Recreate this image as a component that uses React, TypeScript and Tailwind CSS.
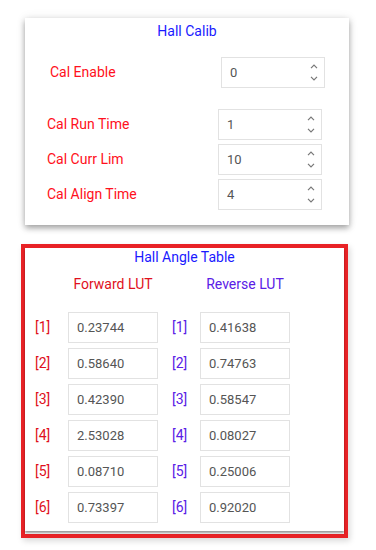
import React from "react";

const font = { fontFamily: "Roboto, 'Noto Sans', sans-serif" };

function Spinner() {
	return (
		<div className="absolute right-[6px] top-0 flex h-full flex-col items-center justify-center gap-[7px]">
			<svg width="8" height="5" viewBox="0 0 8 5" fill="none">
				<path d="M1 4.2 L4 1.2 L7 4.2" stroke="#777" strokeWidth="1.2" />
			</svg>
			<svg width="8" height="5" viewBox="0 0 8 5" fill="none">
				<path d="M1 0.8 L4 3.8 L7 0.8" stroke="#777" strokeWidth="1.2" />
			</svg>
		</div>
	);
}

function NumberBox({ value, className }: { value: string; className: string }) {
	return (
		<div
			className={`relative flex h-[31px] w-[104px] items-center border border-[#e2e2e2] bg-white pl-[8px] text-[13px] text-[#555] ${className}`}
		>
			{value}
			<Spinner />
		</div>
	);
}

function LutBox({ value }: { value: string }) {
	return (
		<div className="flex h-[31px] w-[90px] items-center border border-[#e2e2e2] bg-white pl-[8px] text-[13px] text-[#555]">
			{value}
		</div>
	);
}

const forward = ["0.23744", "0.58640", "0.42390", "2.53028", "0.08710", "0.73397"];
const reverse = ["0.41638", "0.74763", "0.58547", "0.08027", "0.25006", "0.92020"];

export default function App() {
	return (
		<div className="min-h-[550px] w-[376px] bg-white pt-[18px]" style={font}>
			{/* Hall Calib card */}
			<div className="ml-[25px] w-[324px] bg-white pb-[15px] shadow-[0_3px_6px_rgba(0,0,0,0.35),0_0_10px_rgba(0,0,0,0.08)]">
				<div className="pt-[4px] text-center text-[14px] leading-[18px] text-[#1a1aff]">
					Hall Calib
				</div>
				<div className="mt-[17px] flex items-center">
					<span className="pl-[25px] text-[14px] text-[#ff1020]">Cal Enable</span>
					<NumberBox value="0" className="ml-auto mr-[24px]" />
				</div>
				<div className="mt-[21px] flex flex-col gap-[4px]">
					{[
						["Cal Run Time", "1"],
						["Cal Curr Lim", "10"],
						["Cal Align Time", "4"],
					].map(([label, v]) => (
						<div key={label} className="flex items-center">
							<span className="pl-[22px] text-[14px] text-[#ff1020]">{label}</span>
							<NumberBox value={v} className="ml-auto mr-[27px]" />
						</div>
					))}
				</div>
			</div>

			{/* Hall Angle Table card */}
			<div className="ml-[21px] mt-[19px] w-[327px] border-4 border-[#e82226] shadow-[2px_3px_6px_rgba(0,0,0,0.15)]">
				<div className="mb-[3px] bg-white pb-[8px] shadow-[0_2px_2px_rgba(0,0,0,0.4)]">
					<div className="text-center text-[14px] leading-[18px] text-[#1a1aff]">
						Hall Angle Table
					</div>
					<div className="mt-[9px] flex text-[14px] leading-[18px]">
						<div className="ml-[43px] w-[90px] whitespace-nowrap text-center text-[#e0101c]">Forward LUT</div>
						<div className="ml-[42px] w-[90px] whitespace-nowrap text-center text-[#5a20e6]">Reverse LUT</div>
					</div>
					<div className="mt-[19px] flex flex-col gap-[5px]">
						{forward.map((f, i) => (
							<div key={i} className="flex items-center text-[14px]">
								<span className="ml-[10px] w-[33px] text-[#e0101c]">[{i + 1}]</span>
								<LutBox value={f} />
								<span className="ml-[14px] w-[28px] text-[#5a20e6]">[{i + 1}]</span>
								<LutBox value={reverse[i]} />
							</div>
						))}
					</div>
				</div>
			</div>
		</div>
	);
}
